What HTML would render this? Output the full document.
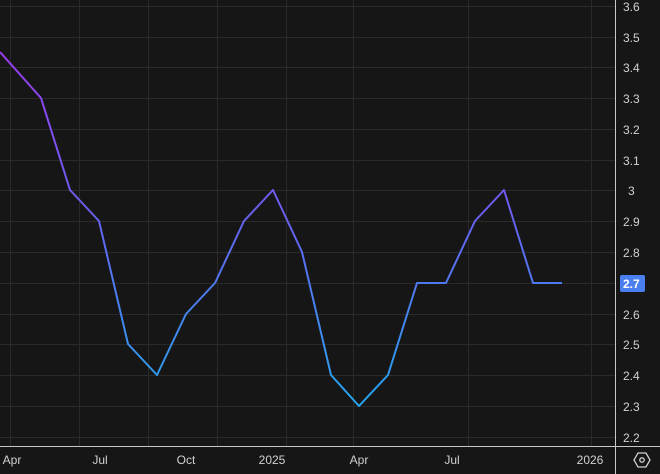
<!DOCTYPE html>
<html><head><meta charset="utf-8"><style>
html,body{margin:0;padding:0;background:#161616;}
svg{display:block}
text{font-family:"Liberation Sans",sans-serif;font-size:12px;fill:#d1d1d1;}
</style></head><body>
<svg width="660" height="474" viewBox="0 0 660 474" xmlns="http://www.w3.org/2000/svg">
<rect width="660" height="474" fill="#161616"/>
<defs>
<linearGradient id="g" gradientUnits="userSpaceOnUse" x1="0" y1="52" x2="0" y2="406">
<stop offset="0" stop-color="#9a3df0"/>
<stop offset="0.45" stop-color="#6a5ff0"/>
<stop offset="1" stop-color="#25a6ee"/>
</linearGradient>
</defs>
<g stroke="#2a2a2a" stroke-width="1">
<line x1="0" y1="6.5" x2="615" y2="6.5"/>
<line x1="0" y1="37.5" x2="615" y2="37.5"/>
<line x1="0" y1="67.5" x2="615" y2="67.5"/>
<line x1="0" y1="98.5" x2="615" y2="98.5"/>
<line x1="0" y1="129.5" x2="615" y2="129.5"/>
<line x1="0" y1="160.5" x2="615" y2="160.5"/>
<line x1="0" y1="190.5" x2="615" y2="190.5"/>
<line x1="0" y1="221.5" x2="615" y2="221.5"/>
<line x1="0" y1="252.5" x2="615" y2="252.5"/>
<line x1="0" y1="283.5" x2="615" y2="283.5"/>
<line x1="0" y1="314.5" x2="615" y2="314.5"/>
<line x1="0" y1="344.5" x2="615" y2="344.5"/>
<line x1="0" y1="375.5" x2="615" y2="375.5"/>
<line x1="0" y1="406.5" x2="615" y2="406.5"/>
<line x1="0" y1="437.5" x2="615" y2="437.5"/>
<line x1="10.5" y1="0" x2="10.5" y2="446"/>
<line x1="79.5" y1="0" x2="79.5" y2="446"/>
<line x1="148.5" y1="0" x2="148.5" y2="446"/>
<line x1="217.5" y1="0" x2="217.5" y2="446"/>
<line x1="286.5" y1="0" x2="286.5" y2="446"/>
<line x1="353.5" y1="0" x2="353.5" y2="446"/>
<line x1="468.5" y1="0" x2="468.5" y2="446"/>
<line x1="591.5" y1="0" x2="591.5" y2="446"/>
</g>
<polyline fill="none" stroke="url(#g)" stroke-width="2" stroke-linejoin="round"
points="0,52 41,98 70,190 99,221 128,344 157,375 186,314 215,283 244,221 273,190 302,252 331,375 359,406 388,375 417,283 446,283 475,221 504,190 533,283 562,283"/>
<line x1="615.5" y1="0" x2="615.5" y2="474" stroke="#c8c8c8"/>
<line x1="0" y1="446.5" x2="660" y2="446.5" stroke="#c8c8c8"/>
<g text-anchor="start">
<text x="623" y="11">3.6</text>
<text x="623" y="42">3.5</text>
<text x="623" y="72">3.4</text>
<text x="623" y="103">3.3</text>
<text x="623" y="134">3.2</text>
<text x="623" y="165">3.1</text>
<text x="628" y="195">3</text>
<text x="623" y="226">2.9</text>
<text x="623" y="257">2.8</text>
<text x="623" y="319">2.6</text>
<text x="623" y="349">2.5</text>
<text x="623" y="380">2.4</text>
<text x="623" y="411">2.3</text>
<text x="623" y="442">2.2</text>
</g>
<rect x="620" y="275" width="25" height="17" rx="2" fill="#4a7ff0"/>
<text x="623" y="288" fill="#fff" style="fill:#fff;font-weight:bold">2.7</text>
<g text-anchor="middle">
<text x="12" y="464">Apr</text>
<text x="100" y="464">Jul</text>
<text x="186" y="464">Oct</text>
<text x="272" y="464">2025</text>
<text x="359" y="464">Apr</text>
<text x="452" y="464">Jul</text>
<text x="590" y="464">2026</text>
</g>
<polygon points="634,460 638,453 646,453 650,460 646,467 638,467" fill="none" stroke="#d1d1d1" stroke-width="1.3"/>
<circle cx="642" cy="460" r="2.2" fill="none" stroke="#d1d1d1" stroke-width="1.3"/>
</svg>
</body></html>
